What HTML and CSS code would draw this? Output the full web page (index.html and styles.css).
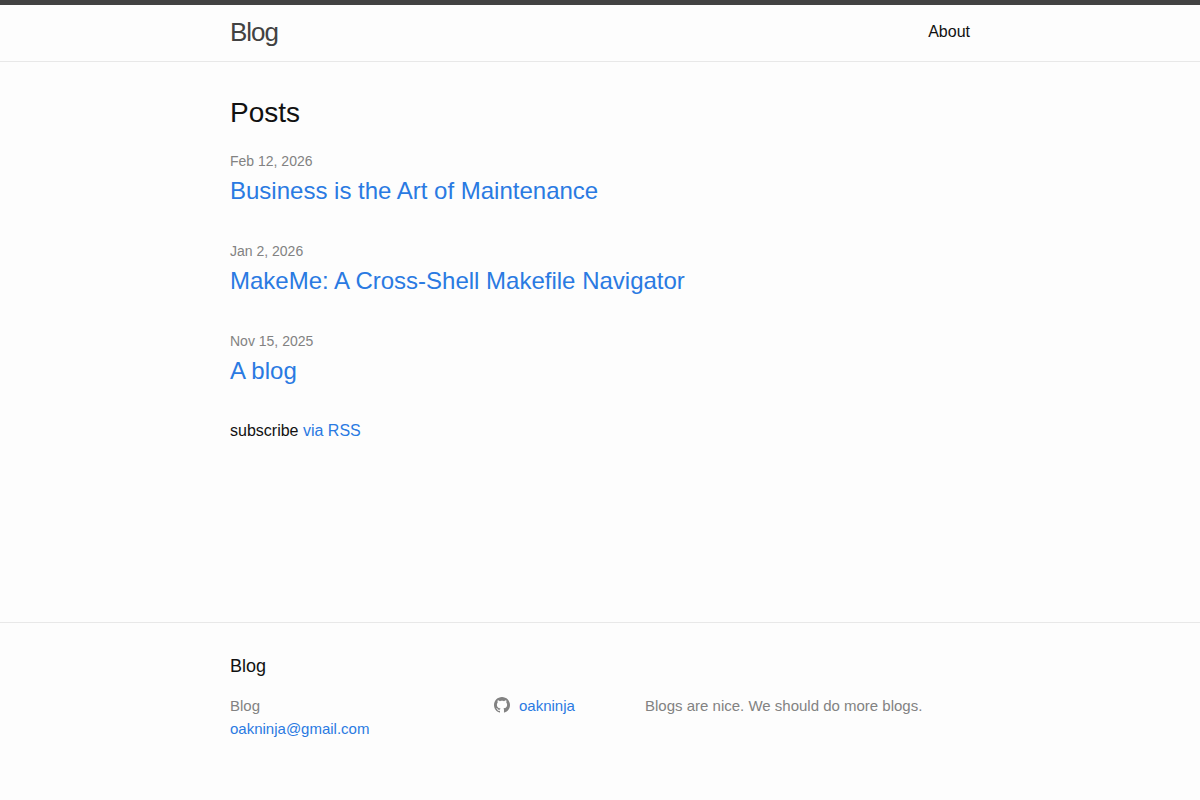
FILE: index.html
```html
<!DOCTYPE html>
<html lang="en">
<head>
<meta charset="utf-8">
<meta name="viewport" content="width=device-width, initial-scale=1">
<title>Blog</title>
<link rel="stylesheet" href="styles.css">
</head>
<body>
<header class="site-header">
  <div class="wrapper header-row">
    <a class="site-title" href="#">Blog</a>
    <nav class="site-nav"><a class="page-link" href="#">About</a></nav>
  </div>
</header>
<main class="page-content">
  <div class="wrapper">
    <h2 class="post-list-heading">Posts</h2>
    <ul class="post-list">
      <li><span class="post-meta">Feb 12, 2026</span><h3><a class="post-link" href="#">Business is the Art of Maintenance</a></h3></li>
      <li><span class="post-meta">Jan 2, 2026</span><h3><a class="post-link" href="#">MakeMe: A Cross-Shell Makefile Navigator</a></h3></li>
      <li><span class="post-meta">Nov 15, 2025</span><h3><a class="post-link" href="#">A blog</a></h3></li>
    </ul>
    <p class="rss-subscribe">subscribe <a href="#">via RSS</a></p>
  </div>
</main>
<footer class="site-footer">
  <div class="wrapper">
    <h2 class="footer-heading">Blog</h2>
    <div class="footer-cols">
      <ul class="contact-list"><li>Blog</li><li><a href="mailto:oakninja@gmail.com">oakninja@gmail.com</a></li></ul>
      <ul class="social-list"><li><a class="social-link" href="#"><svg class="svg-icon" viewBox="0 0 16 16" aria-hidden="true"><path fill-rule="evenodd" d="M8 0C3.58 0 0 3.582 0 8c0 3.535 2.292 6.533 5.47 7.59.4.075.547-.172.547-.385 0-.19-.007-.693-.01-1.36-2.226.483-2.695-1.073-2.695-1.073-.364-.924-.89-1.17-.89-1.17-.725-.496.056-.486.056-.486.803.056 1.225.824 1.225.824.714 1.223 1.873.87 2.33.665.072-.517.278-.87.507-1.07-1.777-.2-3.644-.888-3.644-3.953 0-.873.31-1.587.823-2.147-.083-.202-.358-1.015.077-2.117 0 0 .672-.215 2.2.82.638-.178 1.323-.266 2.003-.27.68.004 1.364.092 2.003.27 1.527-1.035 2.198-.82 2.198-.82.437 1.102.163 1.915.08 2.117.513.56.823 1.274.823 2.147 0 3.073-1.87 3.75-3.653 3.947.287.246.543.735.543 1.48 0 1.07-.01 1.933-.01 2.195 0 .215.144.463.55.385C13.71 14.53 16 11.534 16 8c0-4.418-3.582-8-8-8"/></svg><span>oakninja</span></a></li></ul>
      <p class="description">Blogs are nice. We should do more blogs.</p>
    </div>
  </div>
</footer>
</body>
</html>
```
FILE: styles.css
```css
* { box-sizing: border-box; }
body, h2, h3, p, ul { margin: 0; padding: 0; }
body {
  display: flex;
  flex-direction: column;
  min-height: 100vh;
  background: #fdfdfd;
  color: #111;
  font: 400 16px/24px "Liberation Sans", Arial, sans-serif;
}
h2, h3 { font-weight: 400; }
ul { list-style: none; }
a { color: #2a7ae2; text-decoration: none; }
a:hover { color: #111; text-decoration: underline; }
.wrapper { width: 100%; max-width: 800px; margin: 0 auto; padding: 0 30px; }
.site-header { border-top: 5px solid #424242; border-bottom: 1px solid #e8e8e8; }
.header-row { display: flex; justify-content: space-between; min-height: 56px; }
.site-title { color: #424242; font-size: 26px; line-height: 54px; letter-spacing: -1px; }
.site-title:hover { color: #424242; }
.site-nav { line-height: 54px; }
.page-link { color: #111; }
.page-content { flex: 1 0 auto; padding: 30px 0; }
.post-list-heading { margin-bottom: 15px; font-size: 28px; line-height: 42px; }
.post-list { margin-bottom: 30px; }
.post-list li { margin-bottom: 30px; }
.post-meta { display: block; color: #828282; font-size: 14px; line-height: 24px; }
.post-link { display: block; font-size: 24px; line-height: 36px; }
.site-footer { padding: 30px 0; border-top: 1px solid #e8e8e8; }
.footer-heading { margin-bottom: 14px; font-size: 18px; line-height: 27px; }
.footer-cols {
  display: grid;
  grid-template-columns: 264fr 151fr 325fr;
  padding-bottom: 30px;
  color: #828282;
  font-size: 15px;
  line-height: 23px;
}
.social-link { display: flex; align-items: flex-start; gap: 9px; }
.svg-icon { width: 16px; height: 16px; margin-top: 3px; fill: #828282; }
```
